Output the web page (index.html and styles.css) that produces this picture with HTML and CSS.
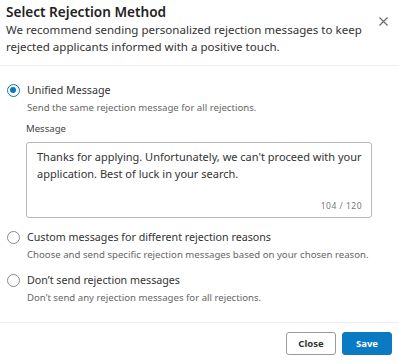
FILE: index.html
```html
<!DOCTYPE html>
<html lang="en">
<head>
    <meta charset="UTF-8">
    <title>Select Rejection Method</title>
    <link rel="stylesheet" href="styles.css">
</head>
<body>
    <div class="modal">
        <div class="modal-header">
            <div>
                <h2>Select Rejection Method</h2>
                <p class="subtitle">We recommend sending personalized rejection messages to keep rejected applicants informed with a positive touch.</p>
            </div>
            <button class="close-x" aria-label="Close">
                <svg width="9" height="9" viewBox="0 0 9 9"><path d="M0.5 0.5L8.5 8.5M8.5 0.5L0.5 8.5" stroke="#666" stroke-width="1.1" fill="none"/></svg>
            </button>
        </div>

        <div class="modal-body">
            <label class="option">
                <span class="radio checked"></span>
                <span class="option-text">
                    <span class="option-title">Unified Message</span>
                    <span class="option-desc">Send the same rejection message for all rejections.</span>
                </span>
            </label>
            <div class="message-field">
                <div class="field-label">Message</div>
                <div class="textarea">
                    <div class="textarea-text">Thanks for applying. Unfortunately, we can't proceed with your application. Best of luck in your search.</div>
                    <div class="counter">104 / 120</div>
                </div>
            </div>

            <label class="option">
                <span class="radio"></span>
                <span class="option-text">
                    <span class="option-title">Custom messages for different rejection reasons</span>
                    <span class="option-desc">Choose and send specific rejection messages based on your chosen reason.</span>
                </span>
            </label>

            <label class="option">
                <span class="radio"></span>
                <span class="option-text">
                    <span class="option-title">Don’t send rejection messages</span>
                    <span class="option-desc">Don’t send any rejection messages for all rejections.</span>
                </span>
            </label>
        </div>

        <div class="modal-footer">
            <button class="btn btn-secondary">Close</button>
            <button class="btn btn-primary">Save</button>
        </div>
    </div>
</body>
</html>
```

FILE: styles.css
```css
* {
    box-sizing: border-box;
    margin: 0;
    padding: 0;
}

body {
    font-family: "Noto Sans", "Open Sans", sans-serif;
    background: #fff;
    color: #333;
}

.modal {
    width: 399px;
    height: 363px;
    display: flex;
    flex-direction: column;
}

.modal-header {
    display: flex;
    justify-content: space-between;
    align-items: flex-start;
    padding: 2px 11px 10px 6px;
    border-bottom: 1px solid #eeeeee;
}

h2 {
    font-size: 13.6px;
    font-weight: 600;
    line-height: 20px;
    color: #222;
}

.subtitle {
    font-size: 11.55px;
    line-height: 17px;
    color: #333;
    width: 362px;
    margin-top: -1px;
}

.close-x {
    border: none;
    background: none;
    margin-top: 15px;
    padding: 0;
    display: flex;
}

.modal-body {
    padding: 16px 6px 15px 6px;
    flex: 1;
}

.option {
    display: flex;
    gap: 7px;
    padding-left: 1px;
}

.option + .option {
    margin-top: 9px;
}

.radio {
    width: 13px;
    height: 13px;
    border: 1px solid #8a8a8a;
    border-radius: 50%;
    flex-shrink: 0;
    margin-top: 2px;
    position: relative;
}

.radio.checked {
    border: 1.5px solid #0a78c0;
}

.radio.checked::after {
    content: "";
    position: absolute;
    left: 2px;
    top: 2px;
    width: 6px;
    height: 6px;
    border-radius: 50%;
    background: #0a78c0;
}

.option-text {
    display: flex;
    flex-direction: column;
}

.option-title {
    font-size: 10.7px;
    line-height: 17px;
    color: #333;
}

.option-desc {
    font-size: 9.65px;
    line-height: 17px;
    color: #666;
}

.message-field {
    margin-left: 20px;
    margin-top: 5px;
    margin-bottom: 11px;
}

.field-label {
    font-size: 9.6px;
    line-height: 16px;
    color: #444;
    margin-bottom: 5px;
}

.textarea {
    width: 346px;
    height: 76px;
    border: 1px solid #b8b8b8;
    border-radius: 3px;
    padding: 5px 9px 5px 10px;
    display: flex;
    flex-direction: column;
    justify-content: space-between;
}

.textarea-text {
    font-size: 11px;
    line-height: 17px;
    color: #333;
}

.counter {
    font-size: 8.5px;
    line-height: 12px;
    color: #777;
    text-align: right;
    letter-spacing: 0.5px;
}

.modal-footer {
    display: flex;
    justify-content: flex-end;
    gap: 6px;
    padding: 9px 7px 8px 6px;
    border-top: 1px solid #eeeeee;
}

.btn {
    font-family: inherit;
    font-size: 9.5px;
    font-weight: 700;
    height: 23px;
    width: 50px;
    border-radius: 3px;
    cursor: pointer;
}

.btn-secondary {
    background: #fff;
    border: 1px solid #9a9a9a;
    color: #333;
}

.btn-primary {
    background: #0a7bc2;
    border: 1px solid #0a7bc2;
    color: #fff;
}
```
